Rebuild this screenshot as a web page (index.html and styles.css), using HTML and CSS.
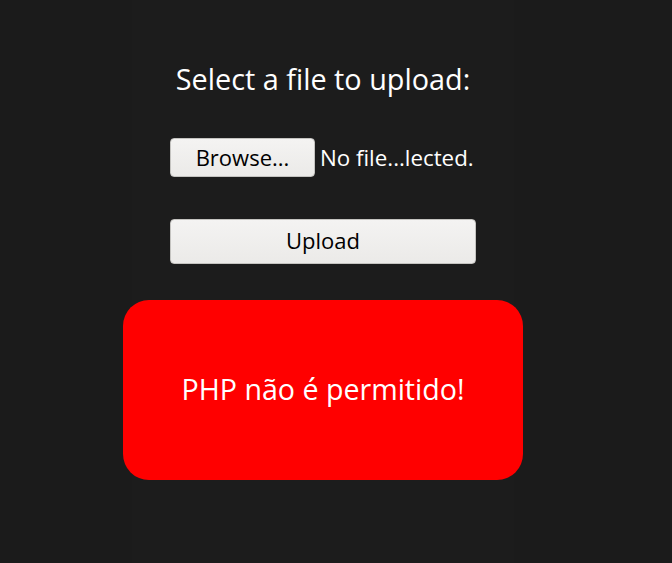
FILE: index.html
```html
<!DOCTYPE html>
<html lang="pt">
<head>
<meta charset="utf-8">
<title>Upload</title>
<link rel="stylesheet" href="styles.css">
</head>
<body>
<main class="page">
  <form class="upload-form">
    <h1 class="title">Select a file to upload:</h1>
    <div class="file-row">
      <button type="button" class="btn btn-browse">Browse...</button>
      <span class="file-status">No file...lected.</span>
    </div>
    <button type="button" class="btn btn-upload">Upload</button>
  </form>
  <div class="alert">PHP não é permitido!</div>
</main>
</body>
</html>
```

FILE: styles.css
```css
html, body {
  margin: 0;
  padding: 0;
  background: #1b1b1b;
}
body {
  font-family: "Open Sans", "Noto Sans", sans-serif;
  color: #ffffff;
}
.page {
  width: 382px;
  margin-left: 132px;
  min-height: 563px;
  background: #1c1c1c;
  display: flex;
  flex-direction: column;
  align-items: center;
  padding-top: 60px;
  box-sizing: border-box;
}
.upload-form {
  width: 306px;
  display: flex;
  flex-direction: column;
}
.title {
  margin: 0;
  font-size: 28.8px;
  font-weight: 400;
  line-height: 38px;
  text-align: center;
  white-space: nowrap;
}
.file-row {
  margin-top: 40px;
  display: flex;
  align-items: center;
  gap: 5px;
}
.btn {
  font-family: inherit;
  font-size: 22px;
  color: #000;
  background: linear-gradient(#f4f3f2, #ebeae8);
  border: 1px solid #c4c3c0;
  border-radius: 4px;
  padding: 0 0 2px;
  margin: 0;
}
.btn-browse {
  width: 145px;
  height: 39px;
}
.file-status {
  font-size: 22.3px;
  white-space: nowrap;
  padding-bottom: 1px;
}
.btn-upload {
  margin-top: 42px;
  width: 306px;
  height: 45px;
  padding-bottom: 3px;
}
.alert {
  margin-top: 36px;
  width: 400px;
  height: 180px;
  box-sizing: border-box;
  padding-bottom: 3px;
  flex: none;
  background: #ff0000;
  border-radius: 26px;
  display: flex;
  align-items: center;
  justify-content: center;
  font-size: 28.6px;
  color: #fff;
}
```
